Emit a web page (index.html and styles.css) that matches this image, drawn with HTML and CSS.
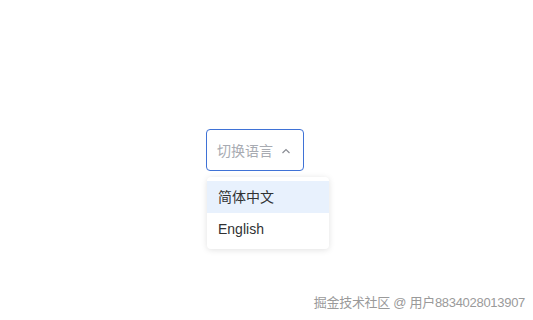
FILE: index.html
```html
<!DOCTYPE html>
<html lang="zh-CN">
<head>
    <meta charset="UTF-8">
    <meta name="viewport" content="width=device-width, initial-scale=1.0">
    <title>切换语言</title>
    <link rel="stylesheet" href="styles.css">
</head>
<body>
    <div class="page">
        <div class="lang-select">
            <button class="lang-button">
                <span>切换语言</span>
                <svg class="arrow" width="12" height="12" viewBox="0 0 12 12">
                    <path d="M2.5 8 L6 4.5 L9.5 8" fill="none" stroke="#8a8d94" stroke-width="1.2"/>
                </svg>
            </button>
            <!-- Dropdown menu -->
            <ul class="lang-menu">
                <li class="active">简体中文</li>
                <li>English</li>
            </ul>
        </div>
    </div>
    <div class="watermark">掘金技术社区 @ 用户8834028013907</div>
</body>
</html>
```
FILE: styles.css
```css
body {
    margin: 0;
    font-family: "Liberation Sans", "Noto Sans CJK SC", sans-serif;
    background-color: #fff;
    width: 533px;
    height: 320px;
    position: relative;
    overflow: hidden;
}
.page {
    padding-top: 129px;
    padding-left: 206px;
}
.lang-select {
    position: relative;
    width: 98px;
}
.lang-button {
    display: flex;
    align-items: center;
    gap: 7px;
    box-sizing: border-box;
    width: 98px;
    height: 42px;
    padding: 0 10px;
    background-color: #fff;
    border: 1px solid #3f72d6;
    border-radius: 4px;
    font-family: inherit;
    font-size: 14px;
    color: #a8abb2;
    cursor: pointer;
}
.arrow {
    margin-top: 1px;
}
.lang-menu {
    position: absolute;
    top: 48px;
    left: 1px;
    width: 122px;
    margin: 0;
    padding: 4px 0;
    list-style: none;
    background-color: #fff;
    border-radius: 4px;
    box-shadow: 0 1px 6px rgba(0, 0, 0, 0.12);
}
.lang-menu li {
    height: 32px;
    line-height: 32px;
    padding-left: 11px;
    font-size: 14px;
    color: #303133;
    cursor: pointer;
}
.lang-menu li.active {
    background-color: #e8f1fd;
}
.watermark {
    position: absolute;
    right: 8px;
    bottom: 9px;
    font-size: 13px;
    color: #9a9a9a;
    text-shadow: 0 0 2px #fff;
    letter-spacing: -0.3px;
}
```
